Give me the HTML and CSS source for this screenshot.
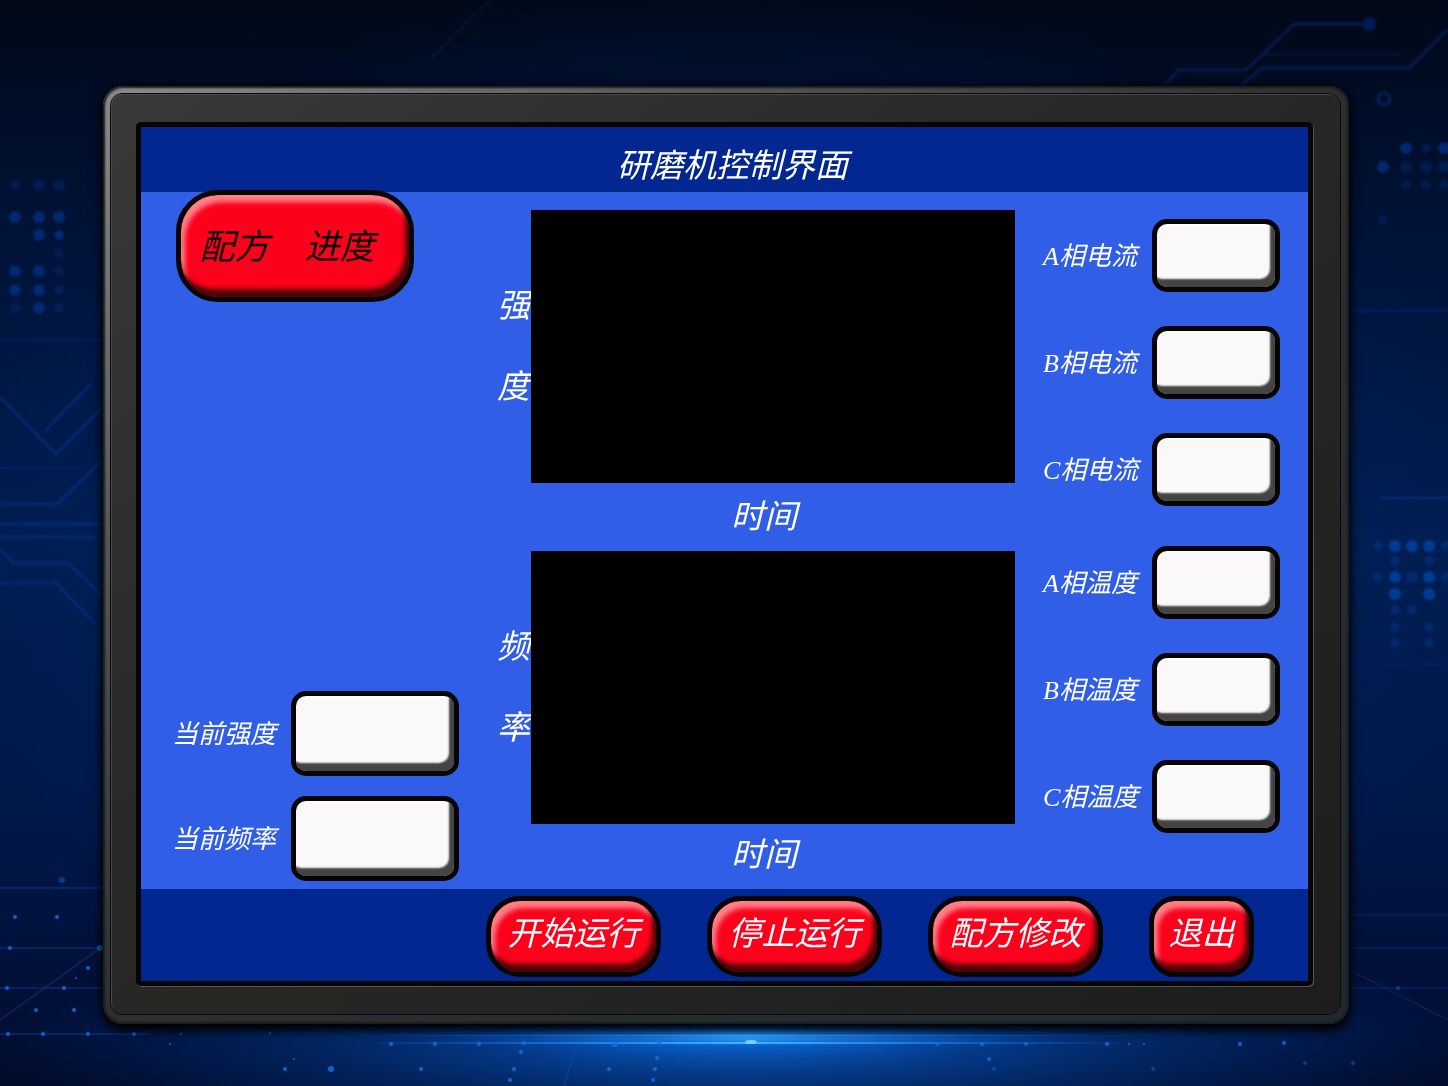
FILE: index.html
```html
<!DOCTYPE html>
<html lang="zh-CN">
<head>
<meta charset="utf-8">
<meta name="viewport" content="width=device-width, initial-scale=1">
<title>研磨机控制界面</title>
<link rel="stylesheet" href="styles.css">
</head>
<body>
<svg class="backdrop" viewBox="0 0 1448 1086" preserveAspectRatio="xMidYMid slice" aria-hidden="true">
  <defs>
    <filter id="soft" x="-20%" y="-20%" width="140%" height="140%"><feGaussianBlur stdDeviation="1"/></filter>
    <filter id="wide" x="-50%" y="-300%" width="200%" height="700%"><feGaussianBlur stdDeviation="3"/></filter>
    <radialGradient id="pool"><stop offset="0" stop-color="#1490ff"/><stop offset=".3" stop-color="#0862d8" stop-opacity=".75"/><stop offset="1" stop-color="#003a9c" stop-opacity="0"/></radialGradient>
    <linearGradient id="beam"><stop offset="0" stop-color="#0a62e0" stop-opacity="0"/><stop offset=".5" stop-color="#45b4ff"/><stop offset="1" stop-color="#0a62e0" stop-opacity="0"/></linearGradient>
  </defs>
  <!-- circuit traces -->
  <g filter="url(#soft)" fill="none" stroke="#00307a" stroke-width="3">
    <path d="M0 397l56 57 46-46M45 431l47-48M0 504h57l45-44M0 524h102M0 537h95M0 548l13 15h55l34 33M0 583h56l39 41" opacity=".8"/>
    <path d="M0 340h102M0 468h80M1352 311h96M1352 664h96" opacity=".4"/>
    <path d="M1380 498h68" opacity=".8"/>
    <path d="M1166 84l12-14h68l48-46h68M1242 85l20-17h147l39-39" opacity=".5"/>
    <path d="M1262 54h140M430 60l60-60" opacity=".2"/>
    <circle cx="1384" cy="99" r="6" opacity=".6"/>
  </g>
  <g filter="url(#soft)" fill="#003388">
    <circle cx="1369" cy="24" r="7" opacity=".5"/>
    <g opacity=".7">
      <circle cx="15" cy="217" r="6"/><circle cx="39" cy="217" r="6"/><circle cx="59" cy="217" r="6"/>
      <circle cx="39" cy="235" r="6"/><circle cx="59" cy="235" r="5"/>
      <circle cx="15" cy="271" r="6"/><circle cx="39" cy="271" r="6"/>
      <circle cx="15" cy="290" r="6"/><circle cx="39" cy="290" r="6"/><circle cx="39" cy="308" r="6"/>
      <circle cx="1406" cy="148" r="6"/><circle cx="1444" cy="148" r="6"/><circle cx="1383" cy="167" r="6"/>
    </g>
    <g opacity=".35">
      <circle cx="15" cy="185" r="5"/><circle cx="39" cy="185" r="6"/><circle cx="59" cy="185" r="6"/>
      <circle cx="59" cy="253" r="5"/><circle cx="59" cy="271" r="5"/><circle cx="59" cy="290" r="5"/><circle cx="59" cy="308" r="5"/><circle cx="15" cy="308" r="5"/>
      <circle cx="1426" cy="148" r="5"/><circle cx="1406" cy="167" r="6"/><circle cx="1426" cy="167" r="6"/><circle cx="1444" cy="167" r="6"/>
      <circle cx="1406" cy="185" r="5"/><circle cx="1426" cy="185" r="5"/><circle cx="1444" cy="185" r="5"/><circle cx="1383" cy="220" r="5"/>
    </g>
  </g>
  <g filter="url(#soft)" fill="#0048a8">
    <g opacity=".75">
      <circle cx="1395" cy="546" r="6"/><circle cx="1412" cy="546" r="6"/><circle cx="1429" cy="546" r="6"/>
      <circle cx="1395" cy="577" r="6"/><circle cx="1429" cy="577" r="6"/><circle cx="1395" cy="594" r="6"/><circle cx="1429" cy="594" r="6"/>
    </g>
    <g opacity=".3">
      <circle cx="1378" cy="546" r="5"/><circle cx="1446" cy="546" r="5"/>
      <circle cx="1395" cy="561" r="5"/><circle cx="1429" cy="561" r="5"/>
      <circle cx="1378" cy="577" r="5"/><circle cx="1412" cy="577" r="6"/><circle cx="1446" cy="577" r="5"/>
      <circle cx="1395" cy="610" r="5"/><circle cx="1412" cy="610" r="5"/>
      <circle cx="1395" cy="627" r="5"/><circle cx="1429" cy="627" r="5"/>
      <circle cx="1395" cy="643" r="5"/><circle cx="1429" cy="643" r="5"/>
    </g>
  </g>
  <!-- lit floor -->
  <ellipse cx="745" cy="1040" rx="760" ry="110" fill="url(#pool)" opacity=".7"/>
  <ellipse cx="745" cy="1036" rx="300" ry="28" fill="url(#pool)"/>
  <g stroke="#0a56c8" fill="none" opacity=".6">
    <path d="M0 888h103M0 948h103M0 988h103M0 1034h150" stroke-width="1"/>
    <path d="M0 1020L103 946M578 1040l-14 46" stroke-width="1"/>
    <path d="M1350 948h98M1350 970l98 50M1350 988h98M1350 915h98" stroke-width="1" opacity=".6"/>
  </g>
  <g filter="url(#wide)"><path d="M400 1036h700v4H400z" fill="url(#beam)"/></g>
  <path d="M330 1035h830v1H330zM380 1042h740v2H380z" fill="url(#beam)"/>
  <ellipse cx="751" cy="1042" rx="6" ry="2" fill="#7fd0ff"/>
  <g fill="#0d72e8" opacity=".85">
    <circle cx="62" cy="880" r="3" opacity=".5"/><circle cx="15" cy="917" r="2"/><circle cx="57" cy="917" r="2"/>
    <circle cx="10" cy="948" r="2"/><circle cx="100" cy="948" r="3"/><circle cx="88" cy="968" r="2"/><circle cx="76" cy="978" r="1"/>
    <circle cx="7" cy="988" r="2"/><circle cx="64" cy="988" r="2"/><circle cx="36" cy="1010" r="2"/><circle cx="74" cy="1010" r="2"/>
    <circle cx="8" cy="1034" r="2"/><circle cx="43" cy="1034" r="2"/><circle cx="88" cy="1034" r="2"/><circle cx="134" cy="1034" r="2"/>
    <circle cx="181" cy="1034" r="1"/><circle cx="170" cy="1044" r="1"/><circle cx="270" cy="1033" r="1"/><circle cx="391" cy="1044" r="2"/>
    <circle cx="294" cy="1059" r="1"/><circle cx="285" cy="1069" r="2"/><circle cx="331" cy="1069" r="3"/><circle cx="421" cy="1069" r="2"/>
    <circle cx="435" cy="1044" r="2"/><circle cx="479" cy="1044" r="2"/><circle cx="524" cy="1043" r="2"/><circle cx="521" cy="1052" r="2"/>
    <circle cx="514" cy="1069" r="2"/><circle cx="510" cy="1080" r="2"/><circle cx="615" cy="1044" r="3"/><circle cx="659" cy="1043" r="2"/>
    <circle cx="657" cy="1058" r="2"/><circle cx="655" cy="1069" r="2"/><circle cx="653" cy="1080" r="2"/><circle cx="609" cy="1069" r="2"/>
    <circle cx="937" cy="1044" r="2"/><circle cx="982" cy="1044" r="2"/><circle cx="1026" cy="1044" r="2"/><circle cx="989" cy="1059" r="2"/>
    <circle cx="1107" cy="1044" r="2"/><circle cx="1129" cy="1044" r="1"/><circle cx="1144" cy="1044" r="1"/><circle cx="1240" cy="1044" r="2"/>
    <circle cx="1284" cy="1043" r="2"/><circle cx="1305" cy="1063" r="2" opacity=".5"/><circle cx="1353" cy="1063" r="2" opacity=".5"/>
    <circle cx="994" cy="1069" r="2" opacity=".5"/><circle cx="1153" cy="1069" r="2" opacity=".5"/><circle cx="1398" cy="988" r="2" opacity=".5"/>
  </g>
</svg>

<div class="device">
  <div class="bezel">
    <div class="screen">
      <header class="titlebar"><h1 class="title">研磨机控制界面</h1></header>

      <main class="panel">
        <section class="side">
          <button class="key key-recipe" type="button">配方　进度</button>
          <div class="readouts readouts-now">
            <div class="readout"><label class="label" for="now-strength">当前强度</label><input class="field field-large" id="now-strength" type="text"></div>
            <div class="readout"><label class="label" for="now-frequency">当前频率</label><input class="field field-large" id="now-frequency" type="text"></div>
          </div>
        </section>

        <section class="charts">
          <figure class="chart">
            <div class="axis"><span>强</span><span>度</span></div>
            <div class="plot"></div>
            <figcaption class="caption">时间</figcaption>
          </figure>
          <figure class="chart">
            <div class="axis"><span>频</span><span>率</span></div>
            <div class="plot"></div>
            <figcaption class="caption">时间</figcaption>
          </figure>
        </section>

        <section class="phases">
          <div class="readouts">
            <div class="readout"><label class="label" for="current-a">A相电流</label><input class="field" id="current-a" type="text"></div>
            <div class="readout"><label class="label" for="current-b">B相电流</label><input class="field" id="current-b" type="text"></div>
            <div class="readout"><label class="label" for="current-c">C相电流</label><input class="field" id="current-c" type="text"></div>
          </div>
          <div class="readouts">
            <div class="readout"><label class="label" for="temp-a">A相温度</label><input class="field" id="temp-a" type="text"></div>
            <div class="readout"><label class="label" for="temp-b">B相温度</label><input class="field" id="temp-b" type="text"></div>
            <div class="readout"><label class="label" for="temp-c">C相温度</label><input class="field" id="temp-c" type="text"></div>
          </div>
        </section>
      </main>

      <footer class="actions">
        <button class="key" type="button">开始运行</button>
        <button class="key" type="button">停止运行</button>
        <button class="key" type="button">配方修改</button>
        <button class="key key-exit" type="button">退出</button>
      </footer>
    </div>
  </div>
</div>
</body>
</html>
```
FILE: styles.css
```css
* {
  box-sizing: border-box;
}

body {
  position: relative;
  min-height: 100vh;
  margin: 0;
  padding: 86px 99px 62px 103px;
  background:
    radial-gradient(ellipse at 50% 50%, #00308099, transparent 75%),
    linear-gradient(#000818, #001236 20%, #001d50 50%, #001848 75%, #001038 90%, #000c2c);
  color: #fff;
  font-family: "Liberation Serif", "Noto Sans CJK SC", serif;
  font-size: 33px;
  font-style: italic;
  font-weight: 400;
  line-height: 40px;
}

.backdrop {
  position: absolute;
  inset: 0;
  width: 100%;
  height: 100%;
}

/* Monitor housing */
.device {
  position: relative;
  padding: 8px 9px 10px 8px;
  border-radius: 20px;
  background: linear-gradient(to bottom right, #8a8a8a, #555 25%, #2e2e2e 50%, #1d2a32);
  box-shadow:
    inset 0 0 2px 2px #1c1c1c,
    0 6px 10px #000,
    0 0 14px #000a;
}

.bezel {
  padding: 28px 27px 28px 25px;
  border-radius: 12px;
  background: linear-gradient(to bottom right, #393937, #2a2a29 35%, #1d1d1d);
  box-shadow: 0 0 0 1px #0a0a0a, inset 1px 1px 0 #484848;
}

.screen {
  border: 5px solid #050505;
  border-radius: 5px;
  background: #305ee6;
  box-shadow: 1px 1px 0 #555;
}

.titlebar {
  display: flex;
  align-items: center;
  justify-content: center;
  min-height: 65px;
  padding: 12px 0 0 16px;
  background: #032790;
}

.title {
  margin: 0;
  font-size: 33px;
  font-weight: 400;
}

.panel {
  display: grid;
  grid-template-columns: 296px 1fr 237px;
  gap: 36px 28px;
  padding: 0 28px 0 31px;
}

/* Left column */
.side {
  display: flex;
  flex-direction: column;
  align-items: flex-start;
  justify-content: space-between;
  padding-bottom: 8px;
}

.readouts {
  display: grid;
  gap: 34px;
}

.readouts-now {
  gap: 20px;
  width: 287px;
}

.readout {
  display: flex;
  align-items: center;
  justify-content: space-between;
}

.label {
  padding-top: 2px;
  font-size: 26px;
  white-space: nowrap;
}

.field {
  width: 128px;
  height: 73px;
  padding: 8px 16px;
  border: 5px solid #050505;
  border-radius: 15px;
  background: #faf8f9;
  box-shadow:
    inset -5px -8px 2px #444,
    inset 0 2px 2px #fff;
  color: #111;
  font: inherit;
  font-size: 26px;
}

.field-large {
  width: 168px;
  height: 85px;
}

/* Charts */
.charts {
  padding-top: 18px;
}

.chart {
  display: grid;
  grid-template-columns: 35px 1fr;
  margin: 0;
}

.axis {
  display: flex;
  flex-direction: column;
  align-items: center;
  justify-content: center;
  gap: 41px;
}

.plot {
  height: 273px;
  background: #000;
}

.caption {
  grid-column: 2;
  padding: 14px 18px 14px 0;
  text-align: center;
}

.chart:last-child .caption {
  padding-top: 11px;
}

/* Phase readings */
.phases {
  display: grid;
  align-content: start;
  gap: 40px;
  padding-top: 27px;
}

/* Buttons */
.key {
  width: 175px;
  height: 81px;
  padding: 0 0 4px;
  border: 5px solid #050505;
  border-radius: 34px;
  background: #fc001c;
  box-shadow:
    inset -4px -8px 4px #500008,
    inset 4px 7px 5px #ff8088;
  color: #fff;
  font: inherit;
  white-space: nowrap;
}

.key-exit {
  width: 105px;
  border-radius: 26px;
}

.key-recipe {
  width: 238px;
  height: 112px;
  margin: -2px 0 0 4px;
  padding: 4px 16px 0 0;
  border-radius: 42px;
  color: #080000;
  font-size: 35px;
}

.actions {
  display: flex;
  flex-wrap: wrap;
  align-items: center;
  justify-content: flex-end;
  gap: 46px;
  min-height: 92px;
  padding: 2px 54px 0 0;
  background: #032790;
}
```
